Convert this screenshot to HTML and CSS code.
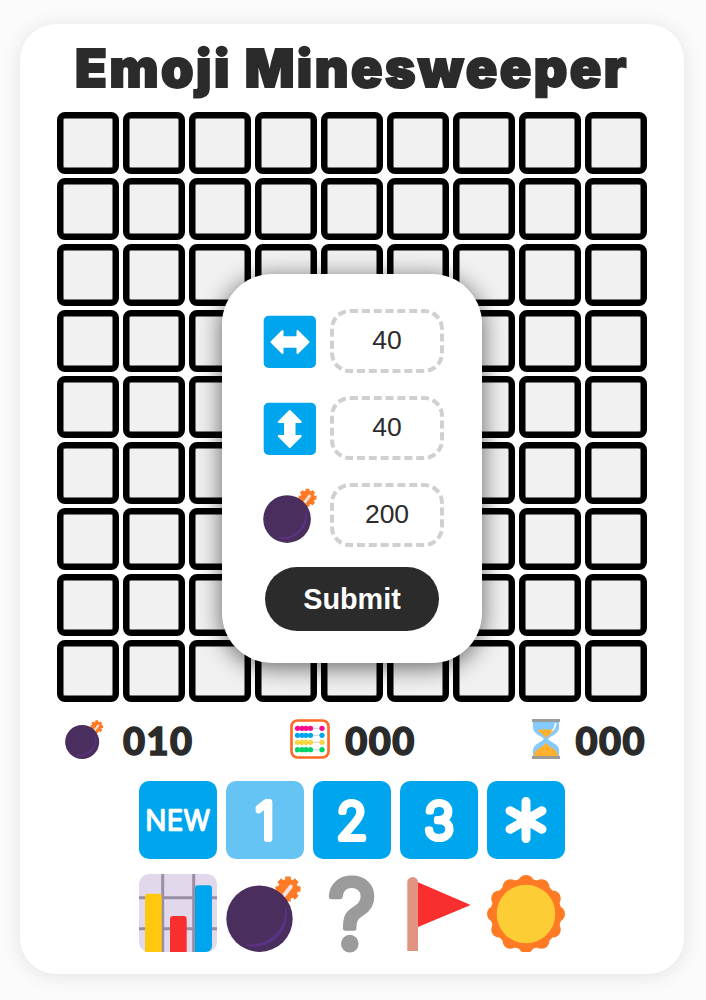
FILE: index.html
```html
<!DOCTYPE html>
<html>
<head>
    <title>Emoji Minesweeper</title>
    <link rel="stylesheet" href="styles.css">
</head>
<body>
    <svg class="defs">
        <symbol id="bomb" viewBox="0 0 78 78">
            <g fill="#ff7a24">
                <circle cx="62" cy="15" r="10"/>
                <g stroke="#ff7a24" stroke-width="5.500">
                    <path d="M62 2.500v25M49.500 15h25M53.200 6.200l17.600 17.600M53.200 23.800l17.600-17.600"/>
                </g>
            </g>
            <path d="M58.300 21l6.400-8.300" stroke="#f0e4e0" stroke-width="4" stroke-linecap="round"/>
            <circle cx="33.500" cy="44.700" r="33.200" fill="#4a2f5e"/>
            <path d="M59.700 34.300c2.600 18-15 39-38.400 36.700C44 76 64 56 59.700 34.300z" fill="#5b3385" stroke="#5b3385" stroke-width="1.500"/>
        </symbol>
    </svg>

    <main class="game">
        <h1 class="title">Emoji Minesweeper</h1>

        <div class="board">
            <div class="grid">
                <div class="cell"></div><div class="cell"></div><div class="cell"></div><div class="cell"></div><div class="cell"></div><div class="cell"></div><div class="cell"></div><div class="cell"></div><div class="cell"></div>
                <div class="cell"></div><div class="cell"></div><div class="cell"></div><div class="cell"></div><div class="cell"></div><div class="cell"></div><div class="cell"></div><div class="cell"></div><div class="cell"></div>
                <div class="cell"></div><div class="cell"></div><div class="cell"></div><div class="cell"></div><div class="cell"></div><div class="cell"></div><div class="cell"></div><div class="cell"></div><div class="cell"></div>
                <div class="cell"></div><div class="cell"></div><div class="cell"></div><div class="cell"></div><div class="cell"></div><div class="cell"></div><div class="cell"></div><div class="cell"></div><div class="cell"></div>
                <div class="cell"></div><div class="cell"></div><div class="cell"></div><div class="cell"></div><div class="cell"></div><div class="cell"></div><div class="cell"></div><div class="cell"></div><div class="cell"></div>
                <div class="cell"></div><div class="cell"></div><div class="cell"></div><div class="cell"></div><div class="cell"></div><div class="cell"></div><div class="cell"></div><div class="cell"></div><div class="cell"></div>
                <div class="cell"></div><div class="cell"></div><div class="cell"></div><div class="cell"></div><div class="cell"></div><div class="cell"></div><div class="cell"></div><div class="cell"></div><div class="cell"></div>
                <div class="cell"></div><div class="cell"></div><div class="cell"></div><div class="cell"></div><div class="cell"></div><div class="cell"></div><div class="cell"></div><div class="cell"></div><div class="cell"></div>
                <div class="cell"></div><div class="cell"></div><div class="cell"></div><div class="cell"></div><div class="cell"></div><div class="cell"></div><div class="cell"></div><div class="cell"></div><div class="cell"></div>
            </div>

            <form class="dialog">
                <div class="field">
                    <svg class="field-icon" viewBox="0 0 56 56">
                        <rect x="0.700" y="2.700" width="52.300" height="52.300" rx="5" fill="#00a6ed"/>
                        <path d="M8.500 29L19.500 18V24.300H34.500V18L45.500 29L34.500 40V33.700H19.500V40Z" fill="#fff" stroke="#fff" stroke-width="2" stroke-linejoin="round"/>
                    </svg>
                    <input class="field-input" type="text" value="40">
                </div>
                <div class="field">
                    <svg class="field-icon" viewBox="0 0 56 56">
                        <rect x="0.700" y="2.700" width="52.300" height="52.300" rx="5" fill="#00a6ed"/>
                        <path d="M26.800 11L37.800 22H31.500V36H37.800L26.800 47L15.800 36H22.100V22H15.800Z" fill="#fff" stroke="#fff" stroke-width="2" stroke-linejoin="round"/>
                    </svg>
                    <input class="field-input" type="text" value="40">
                </div>
                <div class="field">
                    <svg class="field-icon"><use href="#bomb"/></svg>
                    <input class="field-input" type="text" value="200">
                </div>
                <button class="submit" type="button">Submit</button>
            </form>
        </div>

        <div class="stats">
            <div class="stat">
                <svg class="stat-icon"><use href="#bomb"/></svg>
                <span class="stat-value stat-value-mines">010</span>
            </div>
            <div class="stat stat-moves">
                <svg class="stat-icon" viewBox="0 0 40 40">
                    <rect x="1.500" y="1.500" width="37" height="37" rx="6" fill="#fff" stroke="#ff6723" stroke-width="2.600"/>
                    <path d="M5 9.300h30M5 16.300h30M5 23.300h30M5 30.700h30" stroke="#d0d0d0" stroke-width="1"/>
                    <g fill="#f70a8d">
                        <circle cx="7.500" cy="9.300" r="2.600"/><circle cx="12" cy="9.300" r="2.600"/><circle cx="16" cy="9.300" r="2.600"/><circle cx="20.500" cy="9.300" r="2.600"/><circle cx="32" cy="9.300" r="2.600"/>
                    </g>
                    <g fill="#00a6ed">
                        <circle cx="7.500" cy="16.300" r="2.600"/><circle cx="12" cy="16.300" r="2.600"/><circle cx="16" cy="16.300" r="2.600"/><circle cx="20.500" cy="16.300" r="2.600"/><circle cx="32" cy="16.300" r="2.600"/>
                    </g>
                    <g fill="#fcd53f">
                        <circle cx="7.500" cy="23.300" r="2.600"/><circle cx="12" cy="23.300" r="2.600"/><circle cx="16" cy="23.300" r="2.600"/><circle cx="20.500" cy="23.300" r="2.600"/><circle cx="32" cy="23.300" r="2.600"/>
                    </g>
                    <g fill="#00d26a">
                        <circle cx="7.500" cy="30.700" r="2.600"/><circle cx="12" cy="30.700" r="2.600"/><circle cx="16" cy="30.700" r="2.600"/><circle cx="20.500" cy="30.700" r="2.600"/><circle cx="32" cy="30.700" r="2.600"/>
                    </g>
                </svg>
                <span class="stat-value">000</span>
            </div>
            <div class="stat">
                <svg class="stat-icon" viewBox="-6 0 40 40">
                    <path d="M7 3h26v6c0 6-9 8-11 11 2 3 11 5 11 11v6H7v-6c0-6 9-8 11-11-2-3-11-5-11-11z" fill="#83cbff"/>
                    <path d="M11.500 10.500h17c-1.500 3.500-7 5.500-8.500 9-1.500-3.500-7-5.500-8.500-9z" fill="#ffb02e"/>
                    <path d="M20 23c1 5 12 6 12 14H8c0-8 11-9 12-14z" fill="#ffb02e"/>
                    <path d="M30.500 4c0 5-3 8-6 9.500 2-2.500 4-5 4.200-9.500z" fill="#fff"/>
                    <rect x="6" y="0" width="28" height="3" fill="#9b9b9b"/>
                    <rect x="6" y="37" width="28" height="3" fill="#9b9b9b"/>
                </svg>
                <span class="stat-value">000</span>
            </div>
        </div>

        <div class="toolbar">
            <button class="tool tool-key" type="button"><svg viewBox="0 0 78 78"><text class="key-text key-text-small" x="39" y="49">NEW</text></svg></button>
            <button class="tool tool-key tool-active" type="button"><svg viewBox="0 0 78 78"><text class="key-text" x="39" y="58">1</text></svg></button>
            <button class="tool tool-key" type="button"><svg viewBox="0 0 78 78"><text class="key-text" x="39" y="58">2</text></svg></button>
            <button class="tool tool-key" type="button"><svg viewBox="0 0 78 78"><text class="key-text" x="39" y="58">3</text></svg></button>
            <button class="tool tool-key" type="button">
                <svg viewBox="0 0 78 78">
                    <path d="M39 20.500v37M23 29.750l32 18.500M23 48.250l32-18.500" stroke="#fff" stroke-width="9" stroke-linecap="round"/>
                </svg>
            </button>
        </div>

        <div class="toolbar toolbar-modes">
            <button class="tool" type="button">
                <svg viewBox="0 0 78 78">
                    <rect width="78" height="78" rx="10" fill="#e1d8ec"/>
                    <path d="M23.700 0v78M54.700 0v78M0 23.700h78M0 54.700h78" stroke="#998ea4" stroke-width="3"/>
                    <path d="M6 78V22.700a3 3 0 0 1 3-3h10.700a3 3 0 0 1 3 3V78z" fill="#ffc70d"/>
                    <path d="M31 78V45a3 3 0 0 1 3-3h10.700a3 3 0 0 1 3 3V78z" fill="#f92f2f"/>
                    <path d="M56 78V14.300a3 3 0 0 1 3-3h11a3 3 0 0 1 3 3V72a6 6 0 0 1-6 6z" fill="#00a6ed"/>
                </svg>
            </button>
            <button class="tool" type="button"><svg viewBox="0 0 78 78"><use href="#bomb"/></svg></button>
            <button class="tool" type="button"><svg class="mark" viewBox="0 0 78 78"><text class="mark-text" x="39" y="75">?</text></svg></button>
            <button class="tool" type="button">
                <svg viewBox="0 0 78 78">
                    <path d="M7.300 77V8.300a5.350 5.350 0 0 1 10.700 0V77z" fill="#e19482"/>
                    <path d="M18 8.300L70.700 31L18 53z" fill="#f92f2f"/>
                </svg>
            </button>
            <button class="tool" type="button">
                <svg viewBox="0 0 78 78">
                    <g fill="#ff7a24">
                        <circle cx="39" cy="40" r="35.500"/>
                        <circle cx="39" cy="9" r="8"/><circle cx="54.500" cy="13.200" r="8"/><circle cx="65.800" cy="24.500" r="8"/>
                        <circle cx="70" cy="40" r="8"/><circle cx="65.800" cy="55.500" r="8"/><circle cx="54.500" cy="66.800" r="8"/>
                        <circle cx="39" cy="71" r="8"/><circle cx="23.500" cy="66.800" r="8"/><circle cx="12.200" cy="55.500" r="8"/>
                        <circle cx="8" cy="40" r="8"/><circle cx="12.200" cy="24.500" r="8"/><circle cx="23.500" cy="13.200" r="8"/>
                    </g>
                    <circle cx="39" cy="40" r="29.300" fill="#fccd35"/>
                </svg>
            </button>
        </div>
    </main>
</body>
</html>
```
FILE: styles.css
```css
body {
    margin: 0;
    padding: 24px 22px 26px 20px;
    background-color: #fbfbfb;
    font-family: "Liberation Sans", Arial, sans-serif;
    color: #2b2b2b;
}
.defs {
    position: absolute;
    width: 0;
    height: 0;
}
.game {
    height: 950px;
    box-sizing: border-box;
    display: flex;
    flex-direction: column;
    align-items: center;
    background-color: #fff;
    border-radius: 36px;
    box-shadow: 0 2px 20px rgba(0, 0, 0, 0.1);
}
.title {
    margin: 0;
    height: 88px;
    line-height: 90px;
    font-family: Inter, "Noto Sans", sans-serif;
    font-size: 52px;
    font-weight: 900;
    letter-spacing: 2.5px;
    -webkit-text-stroke: 2px #2b2b2b;
}
.board {
    position: relative;
}
.grid {
    display: grid;
    grid-template-columns: repeat(9, 62px);
    grid-auto-rows: 62px;
    gap: 4px;
}
.cell {
    box-sizing: border-box;
    border: 6px solid #000;
    border-radius: 8px;
    background-color: #f1f1f1;
    box-shadow: inset 0 0 0 0.5px #000;
}
.dialog {
    position: absolute;
    top: 162px;
    left: 165px;
    width: 260px;
    height: 389px;
    box-sizing: border-box;
    padding: 35px 0 0 41px;
    background-color: #fff;
    border-radius: 50px;
    box-shadow: 0 4px 24px rgba(0, 0, 0, 0.6);
}
.field {
    display: flex;
    align-items: center;
    gap: 11px;
    height: 64px;
    margin-bottom: 23px;
}
.field-icon {
    width: 56px;
    height: 56px;
    flex: none;
}
.field-input {
    width: 114px;
    height: 64px;
    box-sizing: border-box;
    padding: 0 0 2px;
    border: 4px dashed #d0d0d0;
    border-radius: 20px;
    background: #fff;
    text-align: center;
    font-family: inherit;
    font-size: 26.5px;
    color: #2b2b2b;
}
.submit {
    display: block;
    width: 174px;
    height: 64px;
    margin: -3px 0 0 2px;
    padding: 0;
    border: none;
    border-radius: 32px;
    background-color: #2b2b2b;
    color: #fff;
    font-family: inherit;
    font-size: 28.8px;
    font-weight: bold;
}
.stats {
    width: 590px;
    height: 40px;
    box-sizing: border-box;
    display: flex;
    justify-content: space-between;
    margin-top: 17px;
    padding: 0 1px 0 8px;
}
.stat {
    display: flex;
    align-items: center;
    gap: 15px;
}
.stat-moves {
    margin-right: 8px;
}
.stat-icon {
    width: 40px;
    height: 40px;
}
.stat-value {
    padding-top: 2px;
    font-family: Lato, "Noto Sans", sans-serif;
    font-size: 38px;
    font-weight: 900;
    letter-spacing: 1.5px;
    line-height: 40px;
    -webkit-text-stroke: 1.5px #2b2b2b;
}
.stat-value-mines {
    margin-left: 3px;
}
.toolbar {
    display: flex;
    gap: 9px;
    margin-top: 22px;
}
.toolbar-modes {
    margin-top: 15px;
}
.tool {
    width: 78px;
    height: 78px;
    padding: 0;
    border: none;
    background: none;
}
.tool svg {
    display: block;
    width: 78px;
    height: 78px;
}
.tool .mark {
    overflow: visible;
}
.tool-key {
    border-radius: 10px;
    background-color: #00a6ed;
}
.tool-active {
    background-color: #66c4f4;
}
.key-text {
    font-family: Inter, sans-serif;
    font-size: 50px;
    font-weight: 200;
    text-anchor: middle;
    fill: #fff;
    stroke: #fff;
    stroke-width: 6px;
    stroke-linejoin: round;
    stroke-linecap: round;
}
.key-text-small {
    font-size: 27px;
    font-weight: 200;
    letter-spacing: 1px;
    stroke-width: 2.5px;
}
.mark-text {
    font-family: Inter, sans-serif;
    font-size: 96px;
    font-weight: 400;
    text-anchor: middle;
    fill: #9b9b9b;
    stroke: #9b9b9b;
    stroke-width: 5px;
    stroke-linejoin: round;
}
```
